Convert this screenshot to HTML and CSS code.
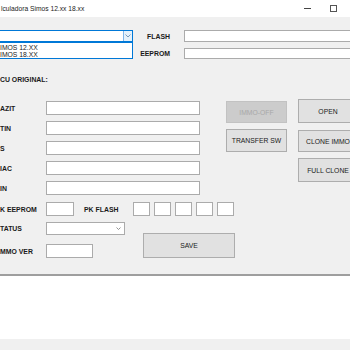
FILE: index.html
```html
<!DOCTYPE html>
<html>
<head>
<meta charset="utf-8">
<link rel="stylesheet" href="styles.css">
</head>
<body>
<div class="window">
  <div class="titlebar">
    <span class="title">lculadora Simos 12.xx 18.xx</span>
    <span class="ctrls"><span class="min"></span><span class="max"></span></span>
  </div>
  <div class="client">
    <div class="top">
      <div class="combo focus">
        <span class="arrowbox"><svg width="6" height="4" viewBox="0 0 6 4"><path d="M0.5 0.5 L3 3 L5.5 0.5" fill="none" stroke="#6a8fb3" stroke-width="0.9"/></svg></span>
        <div class="droplist">
          <div class="item">IMOS 12.XX</div>
          <div class="item">IMOS 18.XX</div>
        </div>
      </div>
      <span class="lbl rlbl">FLASH</span>
      <span class="tb wide1"></span>
      <span class="blank"></span>
      <span class="lbl rlbl">EEPROM</span>
      <span class="tb wide2"></span>
    </div>

    <div class="lbl cu">CU ORIGINAL:</div>

    <div class="main">
      <div class="fields">
        <div class="frow"><span class="lbl flbl">AZIT</span><span class="tb field"></span></div>
        <div class="frow"><span class="lbl flbl">TIN</span><span class="tb field"></span></div>
        <div class="frow"><span class="lbl flbl">S</span><span class="tb field"></span></div>
        <div class="frow"><span class="lbl flbl">IAC</span><span class="tb field"></span></div>
        <div class="frow"><span class="lbl flbl">IN</span><span class="tb field"></span></div>
      </div>
      <div class="bcol1">
        <div class="btn disabled b-immo">IMMO-OFF</div>
        <div class="btn b-transfer">TRANSFER SW</div>
      </div>
      <div class="bcol2">
        <div class="btn b-open">OPEN</div>
        <div class="btn b-clone">CLONE IMMO</div>
        <div class="btn b-full">FULL CLONE</div>
      </div>
    </div>

    <div class="pkrow">
      <span class="lbl flbl">K EEPROM</span>
      <span class="tb pke"></span>
      <span class="lbl pklbl">PK FLASH</span>
      <div class="pkboxes">
        <span class="tb pk"></span><span class="tb pk"></span><span class="tb pk"></span><span class="tb pk"></span><span class="tb pk"></span>
      </div>
    </div>

    <div class="lower">
      <div class="lowleft">
        <div class="srow">
          <span class="lbl flbl">TATUS</span>
          <span class="combo2"><svg width="5" height="3" viewBox="0 0 5 3"><path d="M0.5 0.5 L2.5 2.5 L4.5 0.5" fill="none" stroke="#777" stroke-width="0.8"/></svg></span>
        </div>
        <div class="irow">
          <span class="lbl flbl">MMO VER</span>
          <span class="tb immo"></span>
        </div>
      </div>
      <div class="btn b-save">SAVE</div>
    </div>
  </div>
  <div class="divider"></div>
  <div class="whitearea"></div>
  <div class="footer"></div>
</div>
</body>
</html>
```

FILE: styles.css
```css
html, body {
  margin: 0;
  padding: 0;
  background: #ffffff;
}
.window {
  width: 350px;
  height: 350px;
  overflow: hidden;
  font-family: "Liberation Sans", Arial, sans-serif;
  color: #111;
}
.titlebar {
  height: 17px;
  background: #ffffff;
  display: flex;
  align-items: center;
  justify-content: space-between;
}
.title {
  font-size: 6.7px;
  margin-left: 1px;
  color: #222;
}
.ctrls {
  display: flex;
  align-items: center;
  margin-right: 13px;
}
.min {
  width: 7px;
  height: 1px;
  background: #444;
  margin-right: 19px;
}
.max {
  width: 5px;
  height: 5px;
  border: 1px solid #555;
}
.client {
  height: 257px;
  background: #f0f0f0;
  padding-top: 13px;
  box-sizing: border-box;
}
.top {
  display: grid;
  grid-template-columns: 133px 51px 190px;
  grid-template-rows: 12px 11px;
  row-gap: 6px;
  align-items: center;
}
.lbl {
  font-weight: bold;
  font-size: 6.9px;
  color: #1a1a1a;
  white-space: nowrap;
}
.rlbl {
  text-align: right;
  padding-right: 14px;
}
.tb {
  display: block;
  flex: none;
  background: #ffffff;
  border: 1px solid #ababab;
  box-sizing: border-box;
}
.wide1 { height: 12px; }
.wide2 { height: 11px; }
.combo {
  position: relative;
  height: 12px;
  margin-left: -1px;
  background: #ffffff;
  border: 1px solid #0078d7;
  box-sizing: border-box;
}
.arrowbox {
  position: absolute;
  right: 0;
  top: 0;
  bottom: 0;
  width: 8px;
  background: #e5f1fb;
  border-left: 1px solid #7eb4ea;
  display: flex;
  align-items: center;
  justify-content: center;
}
.droplist {
  position: absolute;
  top: 11px;
  left: -1px;
  right: -1px;
  height: 17px;
  background: #ffffff;
  border: 1px solid #0078d7;
  box-sizing: border-box;
  padding-top: 1px;
  z-index: 2;
}
.item {
  font-size: 6.8px;
  line-height: 7px;
  color: #222;
}
.cu {
  margin-top: 17px;
  line-height: 8px;
  height: 8px;
}
.main {
  margin-top: 15px;
  display: flex;
  align-items: flex-start;
}
.fields {
  width: 200px;
  flex: none;
  padding-top: 2px;
  display: flex;
  flex-direction: column;
  gap: 6px;
}
.frow {
  display: flex;
  align-items: center;
  height: 14px;
}
.flbl {
  width: 46px;
  flex: none;
}
.field {
  width: 154px;
  height: 14px;
}
.btn {
  background: #e1e1e1;
  border: 1px solid #adadad;
  box-sizing: border-box;
  font-size: 6.8px;
  color: #1a1a1a;
  display: flex;
  align-items: center;
  justify-content: center;
  white-space: nowrap;
  flex: none;
}
.btn.disabled {
  background: #cccccc;
  border-color: #c2c2c2;
  color: #a8a8a8;
}
.bcol1 {
  margin-left: 26px;
  width: 61px;
  flex: none;
  padding-top: 2px;
  display: flex;
  flex-direction: column;
  gap: 6px;
}
.b-immo { height: 22px; }
.b-transfer { height: 23px; }
.bcol2 {
  margin-left: 11px;
  width: 60px;
  flex: none;
  display: flex;
  flex-direction: column;
}
.b-open { height: 24px; }
.b-clone { height: 22px; margin-top: 7px; }
.b-full { height: 24px; margin-top: 6px; }
.pkrow {
  margin-top: 7px;
  display: flex;
  align-items: center;
  height: 14px;
}
.pke {
  width: 28px;
  height: 14px;
}
.pklbl {
  margin-left: 10px;
  width: 49px;
  flex: none;
}
.pkboxes {
  display: flex;
  gap: 4px;
}
.pk {
  width: 17px;
  height: 14px;
}
.lower {
  display: flex;
  align-items: flex-start;
  margin-top: 6px;
}
.lowleft {
  width: 143px;
  flex: none;
}
.srow {
  display: flex;
  align-items: center;
  height: 13px;
}
.combo2 {
  width: 79px;
  height: 13px;
  flex: none;
  background: #ffffff;
  border: 1px solid #ababab;
  box-sizing: border-box;
  display: flex;
  align-items: center;
  justify-content: flex-end;
  padding-right: 3px;
}
.irow {
  display: flex;
  align-items: center;
  height: 14px;
  margin-top: 9px;
}
.immo {
  width: 47px;
  height: 14px;
}
.b-save {
  width: 92px;
  height: 25px;
  margin-top: 11px;
}
.divider {
  height: 2px;
  background: #9e9e9e;
}
.whitearea {
  height: 63px;
  background: #ffffff;
}
.footer {
  height: 11px;
  background: #f0f0f0;
}
```
